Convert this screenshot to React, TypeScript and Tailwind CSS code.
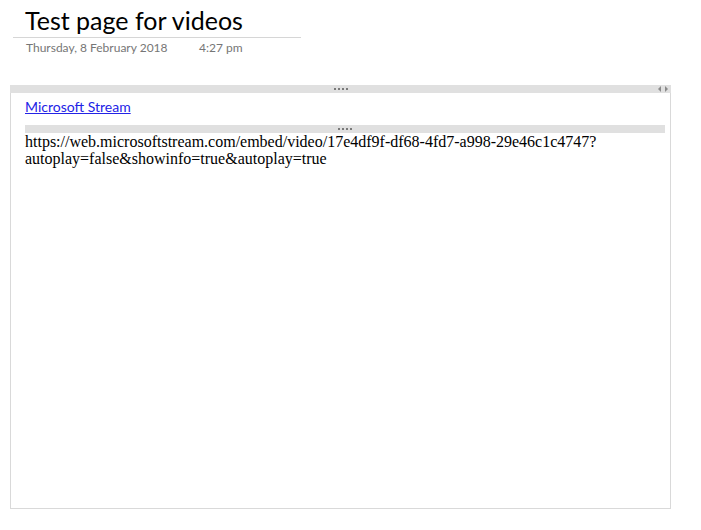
export default function App() {
  return (
    <div className="w-[701px] h-[530px] bg-white relative overflow-hidden">
      {/* page header */}
      <div className="ml-[13px] pt-[3px] w-[288px]">
        <div className="pl-[12px] text-[25px] leading-[34px] text-black font-['Lato','Open_Sans',sans-serif]">
          Test page for videos
        </div>
        <div className="h-px bg-[#d6d6d6]" />
        <div className="flex pl-[13px] pt-[2px] text-[12px] leading-[16px] text-[#767676] font-['Lato','Open_Sans',sans-serif]">
          <span className="w-[173px]">Thursday, 8 February 2018</span>
          <span>4:27 pm</span>
        </div>
      </div>

      {/* embed container */}
      <div className="ml-[10px] mt-[29px] w-[661px] h-[424px] border border-t-0 border-[#d9d9d9] flex flex-col">
        <div className="h-[8px] bg-[#e0e0e0] relative flex items-center justify-center -mx-px">
          <Dots />
          <div className="absolute right-[3px] top-[1px] flex gap-[2px]">
            <svg width="4" height="6" viewBox="0 0 4 6"><path d="M3 0 L0 3 L3 6 Z" fill="#8a8a8a" /></svg>
            <svg width="4" height="6" viewBox="0 0 4 6"><path d="M1 0 L4 3 L1 6 Z" fill="#8a8a8a" /></svg>
          </div>
        </div>
        <div className="pl-[14px] pr-[5px] pt-[5px]">
          <a
            href="#"
            className="block text-[14px] leading-[18px] text-[#2323e6] underline font-['Lato','Open_Sans',sans-serif]"
          >
            Microsoft Stream
          </a>
          <div className="mt-[9px] h-[8px] bg-[#e0e0e0] flex items-center justify-center">
            <Dots />
          </div>
          <div className="text-[16px] leading-[17px] text-black font-['Liberation_Serif','Times_New_Roman',serif] break-all pr-[60px]">
            https://web.microsoftstream.com/embed/video/17e4df9f-df68-4fd7-a998-29e46c1c4747?
            <br />
            autoplay=false&amp;showinfo=true&amp;autoplay=true
          </div>
        </div>
      </div>
    </div>
  );
}

function Dots() {
  return (
    <div className="flex gap-[2px]">
      {[0, 1, 2, 3].map((i) => (
        <div key={i} className="w-[2px] h-[2px] bg-[#7a7a7a]" />
      ))}
    </div>
  );
}
